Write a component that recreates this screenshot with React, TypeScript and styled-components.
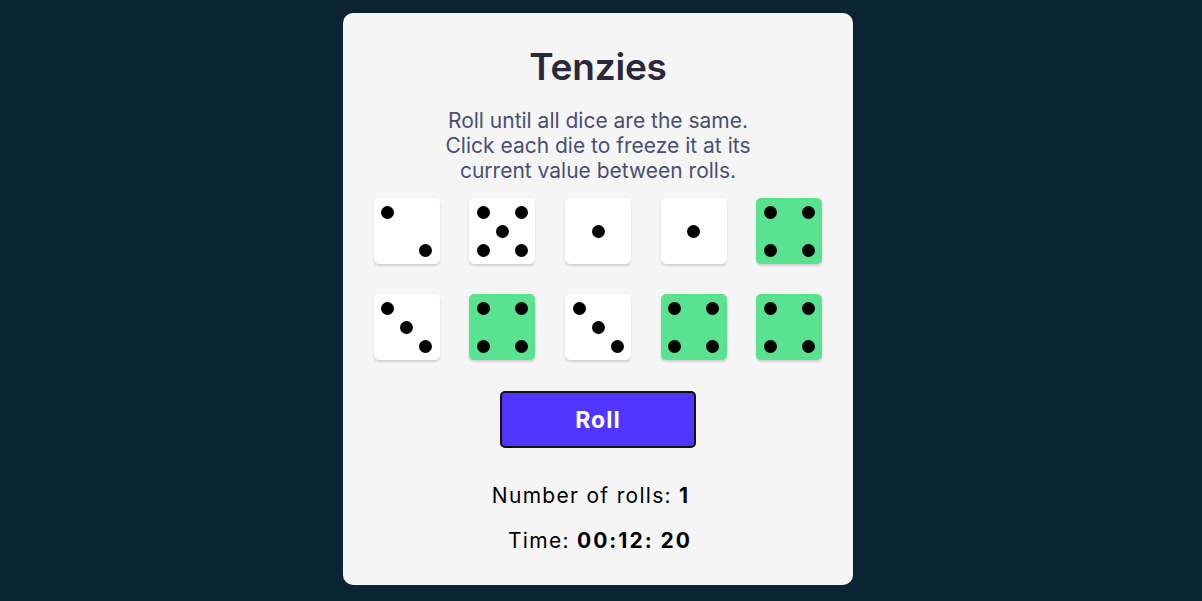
import React from "react";
import styled, { createGlobalStyle } from "styled-components";

const GlobalStyle = createGlobalStyle`
  html, body { margin: 0; padding: 0; }
  body {
    background: #0B2434;
    font-family: "Inter", "Noto Sans", sans-serif;
  }
`;

const Page = styled.div`
  width: 1202px;
  height: 601px;
  display: flex;
  justify-content: center;
  padding: 13px 6px 0 0;
  box-sizing: border-box;
`;

const Card = styled.main`
  width: 510px;
  height: 572px;
  box-sizing: border-box;
  background: #F5F5F5;
  border-radius: 10px;
  display: flex;
  flex-direction: column;
  align-items: center;
  padding-top: 31px;
`;

const Title = styled.h1`
  margin: 0;
  font-family: "Inter", sans-serif;
  font-size: 37px;
  line-height: 46px;
  font-weight: 600;
  letter-spacing: -0.2px;
  color: #2B283A;
`;

const Instructions = styled.p`
  margin: 18px 0 0;
  width: 320px;
  text-align: center;
  font-family: "Inter", sans-serif;
  font-size: 21px;
  line-height: 25px;
  font-weight: 400;
  color: #4A4E74;
`;

const DiceGrid = styled.div`
  margin-top: 15px;
  display: grid;
  grid-template-columns: repeat(5, 66px);
  grid-auto-rows: 66px;
  column-gap: 29.7px;
  row-gap: 30px;
`;

const Die = styled.button<{ $held: boolean }>`
  width: 66px;
  height: 66px;
  border: none;
  padding: 0;
  border-radius: 5px;
  background: ${(p) => (p.$held ? "#59E391" : "#FFFFFF")};
  box-shadow: 0 2px 2px rgba(0, 0, 0, 0.15);
  position: relative;
  cursor: pointer;
`;

const Pip = styled.span<{ $x: number; $y: number }>`
  position: absolute;
  width: 13px;
  height: 13px;
  border-radius: 50%;
  background: #000;
  left: ${(p) => p.$x - 6.5}px;
  top: ${(p) => p.$y - 6.5}px;
`;

const RollButton = styled.button`
  margin-top: 31px;
  width: 196px;
  height: 57px;
  box-sizing: border-box;
  background: #5035FF;
  color: #fff;
  border: 2px solid #111;
  border-radius: 5px;
  font-family: "Inter", sans-serif;
  font-weight: 700;
  font-size: 23px;
  letter-spacing: 1px;
  cursor: pointer;
`;

const Stat = styled.p<{ $gap: number; $shift: number }>`
  margin: ${(p) => p.$gap}px 0 0;
  padding: ${(p) =>
    p.$shift < 0 ? `0 ${-p.$shift * 2}px 0 0` : `0 0 0 ${p.$shift * 2}px`};
  font-family: "Inter", sans-serif;
  font-size: 21px;
  line-height: 25px;
  letter-spacing: 1.3px;
  color: #000;
  text-align: center;
`;

const StatValue = styled.strong`
  font-weight: 700;
  letter-spacing: 2px;
`;

const A = 14;
const M = 33;
const Z = 52;

const pipLayouts: Record<number, [number, number][]> = {
  1: [[M, M]],
  2: [[A, A], [Z, Z]],
  3: [[A, A], [M, M], [Z, Z]],
  4: [[A, A], [Z, A], [A, Z], [Z, Z]],
  5: [[A, A], [Z, A], [M, M], [A, Z], [Z, Z]],
  6: [[A, A], [Z, A], [A, M], [Z, M], [A, Z], [Z, Z]],
};

const dice: { value: number; held: boolean }[] = [
  { value: 2, held: false },
  { value: 5, held: false },
  { value: 1, held: false },
  { value: 1, held: false },
  { value: 4, held: true },
  { value: 3, held: false },
  { value: 4, held: true },
  { value: 3, held: false },
  { value: 4, held: true },
  { value: 4, held: true },
];

export default function App() {
  return (
    <>
      <GlobalStyle />
      <Page>
        <Card>
          <Title>Tenzies</Title>
          <Instructions>
            Roll until all dice are the same. Click each die to freeze it at its
            current value between rolls.
          </Instructions>
          <DiceGrid>
            {dice.map((d, i) => (
              <Die key={i} $held={d.held} aria-label={`Die showing ${d.value}`}>
                {pipLayouts[d.value].map(([x, y], j) => (
                  <Pip key={j} $x={x} $y={y} />
                ))}
              </Die>
            ))}
          </DiceGrid>
          <RollButton>Roll</RollButton>
          <Stat $gap={35} $shift={-7}>
            Number of rolls: <StatValue>1</StatValue>
          </Stat>
          <Stat $gap={20} $shift={2}>
            Time: <StatValue>00:12: 20</StatValue>
          </Stat>
        </Card>
      </Page>
    </>
  );
}
